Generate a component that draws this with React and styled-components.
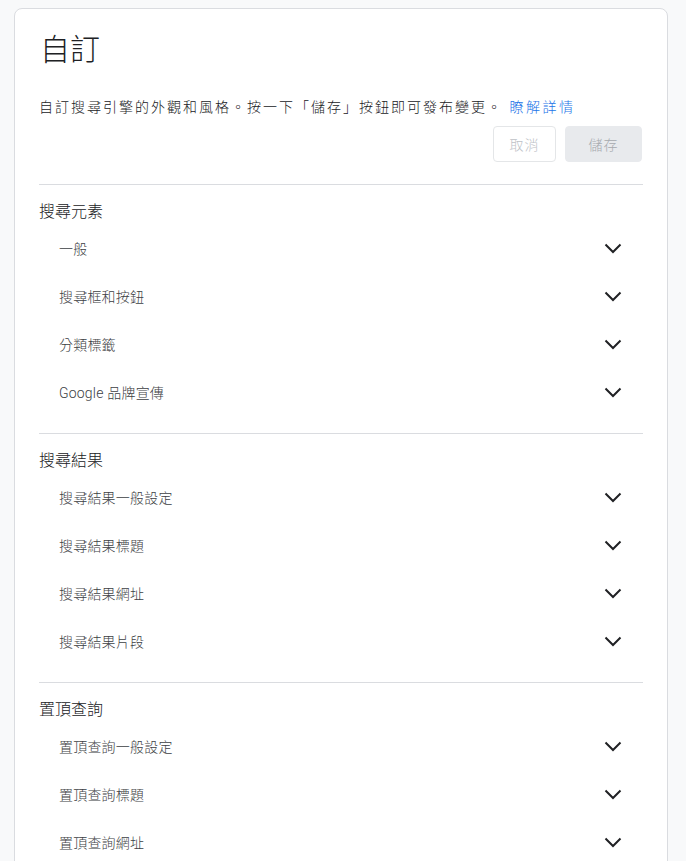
import styled, { createGlobalStyle } from 'styled-components'

const GlobalStyle = createGlobalStyle`
	body {
		margin: 0;
		background-color: #f8f9fa;
		font-family: Roboto, "Noto Sans CJK TC", sans-serif;
		color: #202124;
	}
`

const sections = [
	{ title: '搜尋元素', items: ['一般', '搜尋框和按鈕', '分類標籤', 'Google 品牌宣傳'] },
	{ title: '搜尋結果', items: ['搜尋結果一般設定', '搜尋結果標題', '搜尋結果網址', '搜尋結果片段'] },
	{ title: '置頂查詢', items: ['置頂查詢一般設定', '置頂查詢標題', '置頂查詢網址'] },
]

const Chevron = () => (
	<svg width="24" height="24" viewBox="0 0 24 24" fill="none">
		<path d="M4.5 8.5 L12 16 L19.5 8.5" stroke="#202124" strokeWidth="2" />
	</svg>
)

const App = () => {
	return (
		<Page>
			<GlobalStyle />
			<Card>
				<Title>自訂</Title>
				<Desc>
					自訂搜尋引擎的外觀和風格。按一下「儲存」按鈕即可發布變更。 <a href="#">瞭解詳情</a>
				</Desc>
				<Actions>
					<Button>取消</Button>
					<Button $primary>儲存</Button>
				</Actions>
				{sections.map(s => (
					<Section key={s.title}>
						<SectionTitle>{s.title}</SectionTitle>
						{s.items.map(item => (
							<Row key={item}>
								<span>{item}</span>
								<Chevron />
							</Row>
						))}
					</Section>
				))}
			</Card>
		</Page>
	)
}

const Page = styled.div`
	padding: 8px 18px 0 14px;
`

const Card = styled.div`
	background-color: #fff;
	border: 1px solid #dadce0;
	border-radius: 8px;
	padding: 21px 24px 0 24px;
	font-weight: 300;
`

const Title = styled.h1`
	margin: 0 0 0 1px;
	font-size: 30px;
	line-height: 40px;
	font-weight: 300;
`

const Desc = styled.p`
	margin: 27px 0 0 0;
	font-size: 14px;
	line-height: 20px;
	letter-spacing: 2px;

	a {
		color: #1a73e8;
		text-decoration: none;
		letter-spacing: 2.5px;
		margin-left: 1px;
	}
`

const Actions = styled.div`
	display: flex;
	justify-content: flex-end;
	gap: 9px;
	margin-top: 9px;
	padding-bottom: 22px;
	border-bottom: 1px solid #dadce0;
`

const Button = styled.button`
	height: 36px;
	box-sizing: border-box;
	border-radius: 4px;
	font-family: inherit;
	font-weight: 300;
	font-size: 14px;
	letter-spacing: 1px;
	padding: 0;
	width: ${p => (p.$primary ? '77px' : '63px')};
	border: 1px solid ${p => (p.$primary ? '#e8eaed' : '#e4e6e8')};
	background-color: ${p => (p.$primary ? '#e8eaed' : '#fff')};
	color: ${p => (p.$primary ? '#a6a9ad' : '#bdc1c6')};
	margin-right: ${p => (p.$primary ? '1px' : '0')};
`

const Section = styled.div`
	padding: 15px 0 17px;
	border-bottom: 1px solid #dadce0;
`

const SectionTitle = styled.div`
	font-size: 16px;
	line-height: 24px;
`

const Row = styled.div`
	display: flex;
	align-items: center;
	justify-content: space-between;
	height: 48px;
	padding: 0 18px 0 20px;
	font-size: 14px;
	color: #3c4043;
	letter-spacing: 0.2px;
`

export default App
